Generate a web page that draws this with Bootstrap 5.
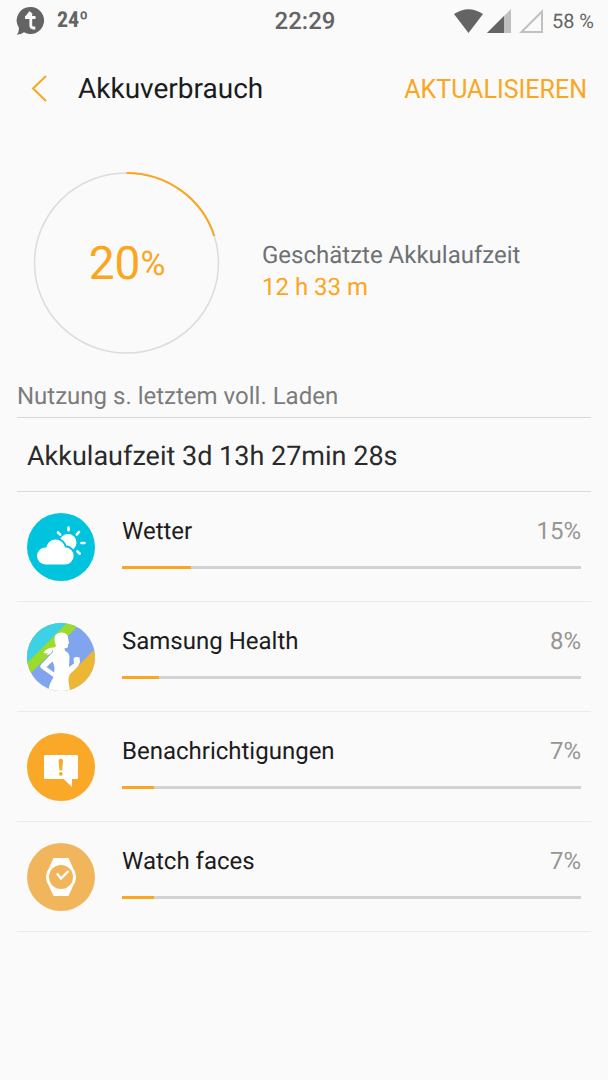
<!DOCTYPE html>
<html lang="de">
<head>
<meta charset="utf-8">
<meta name="viewport" content="width=device-width, initial-scale=1">
<title>Akkuverbrauch</title>
<link href="https://cdn.jsdelivr.net/npm/bootstrap@5.3.0/dist/css/bootstrap.min.css" rel="stylesheet">
<style>
  :root { --accent: #faa61f; --ink: #1c1c1c; --muted: #6e7173; }
  body { background: #fafafa; color: var(--ink); font-family: Roboto, sans-serif; font-size: 24px; line-height: 32px; text-rendering: geometricPrecision; }
  svg { display: block; flex: none; }
  .status-bar { height: 42px; padding: 0 14px 0 16px; color: #646464; line-height: 42px; }
  .status-side { flex: 1 1 0; }
  .status-temp { font-family: "Roboto Condensed", Roboto, sans-serif; font-weight: 700; font-size: 22px; line-height: 44px; }
  .status-time { font-weight: 500; }
  .status-level { font-size: 20px; }
  .app-bar { height: 94px; padding: 0 21px 0 28px; }
  .app-title { font-size: 28px; line-height: 36px; font-weight: 400; }
  .text-accent { color: var(--accent); }
  .refresh-btn { border: 0; background: none; color: var(--accent); font-size: 25px; padding: 2px 0 0; }
  .summary { padding: 35px 32px 0; gap: 40px; }
  .ring { width: 190px; height: 184px; }
  .ring-value { position: absolute; inset: 0; padding-top: 2px; }
  .ring-number { font-size: 46px; }
  .ring-unit { font-size: 34px; }
  .summary-text { padding-top: 16px; }
  .muted-text { color: var(--muted); }
  .usage { padding: 0 17px; }
  .usage-head { font-size: 24px; font-weight: 400; line-height: 32px; color: #7c7c7c; padding: 25px 0 5px; border-bottom: 1px solid #d8d8d8; }
  .uptime { font-size: 27px; line-height: 36px; padding: 20px 10px 17px; border-bottom: 1px solid #d8d8d8; color: #2a2a2a; }
  .app-row { height: 110px; padding: 0 10px; gap: 27px; border: 0; border-bottom: 1px solid #ececec; background: none; color: var(--ink); }
  .app-info { padding-bottom: 10px; }
  .app-share { color: #969696; }
  .app-meter { height: 3px; border-radius: 0; background: #d3d3d3; margin-top: 19px; }
  .app-meter .progress-bar { background: var(--accent); }
</style>
</head>
<body>
<header>
  <div class="status-bar d-flex align-items-center">
    <div class="status-side d-flex align-items-center gap-2">
      <svg width="29" height="30" viewBox="0 0 29 30"><path d="M14.500 1a13.500 13.500 0 1 1-6.500 25.300Q5 28.500 1 28.800Q3 26 3 22A13.500 13.500 0 0 1 14.500 1Z" fill="#646464"/><path d="M14.800 7v12q0 3 2.500 3h2M9 11.500h10.500M14.500 6l-4 5" fill="none" stroke="#fafafa" stroke-width="2.800"/></svg>
      <span class="status-temp ms-1">24º</span>
    </div>
    <span class="status-time">22:29</span>
    <div class="status-side d-flex align-items-center justify-content-end">
      <svg width="94" height="26" viewBox="0 0 94 26"><path d="M0 6Q14.500-3.500 29 6L14.500 25Z" fill="#646464"/><path d="M33 25 57 1V25Z" fill="#c0c0c0"/><path d="M33 25 50 8V25Z" fill="#646464"/><path d="M67.500 24 88 3.500V24Z" fill="none" stroke="#c0c0c0" stroke-width="2"/></svg>
      <span class="status-level ms-1">58 %</span>
    </div>
  </div>
  <nav class="app-bar d-flex align-items-center" aria-label="Kopfzeile">
    <a href="#" class="text-accent" aria-label="Zurück"><svg width="22" height="30" viewBox="0 0 22 30"><path d="M18 2 5 14.500 18 27" fill="none" stroke="currentColor" stroke-width="2"/></svg></a>
    <h1 class="app-title mb-0 ms-4 ps-1">Akkuverbrauch</h1>
    <button type="button" class="refresh-btn ms-auto">AKTUALISIEREN</button>
  </nav>
</header>
<main>
  <section class="summary d-flex align-items-center">
    <div class="ring position-relative flex-shrink-0">
      <svg width="190" height="184" viewBox="0 0 190 184"><ellipse cx="94.500" cy="92" rx="92" ry="90" fill="none" stroke="#dcdcdc" stroke-width="1.500"/><path d="M94.500 2A92 90 0 0 1 182.300 65" fill="none" stroke="#faa61f" stroke-width="2"/></svg>
      <div class="ring-value text-accent d-flex align-items-center justify-content-center"><span class="ring-number">20</span><span class="ring-unit">%</span></div>
    </div>
    <div class="summary-text">
      <div class="muted-text">Geschätzte Akkulaufzeit</div>
      <div class="text-accent">12 h 33 m</div>
    </div>
  </section>
  <section class="usage">
    <h2 class="usage-head mb-0">Nutzung s. letztem voll. Laden</h2>
    <div class="uptime">Akkulaufzeit 3d 13h 27min 28s</div>
    <ul class="list-group rounded-0">
      <li class="list-group-item app-row d-flex align-items-center">
        <svg width="68" height="68" viewBox="0 0 68 68"><circle cx="34" cy="34" r="34" fill="#00c4de"/><circle cx="41" cy="29.500" r="8.500" fill="#fff"/><g stroke="#fff" stroke-width="2.600" stroke-linecap="round"><path d="M31 19.500l2.200 2.200M41.500 14.500v2.800M52 19l-2.200 2.500M54.500 30h3M50.500 38.500l2.300 2.200"/></g><path d="M18.500 51.500a8.500 8.500 0 0 1 0-17h.8a9.500 9.500 0 0 1 18.700-.2 8.600 8.600 0 0 1 0 17.200Z" fill="#fff" stroke="#00c4de" stroke-width="4" paint-order="stroke"/></svg>
        <div class="app-info flex-grow-1">
          <div class="d-flex justify-content-between"><span>Wetter</span><span class="app-share">15%</span></div>
          <div class="progress app-meter" role="progressbar" aria-label="Wetter" aria-valuenow="15" aria-valuemin="0" aria-valuemax="100"><div class="progress-bar" style="width:15%"></div></div>
        </div>
      </li>
      <li class="list-group-item app-row d-flex align-items-center">
        <svg width="68" height="68" viewBox="0 0 68 68"><defs><clipPath id="disc"><circle cx="34" cy="34" r="34"/></clipPath></defs><g clip-path="url(#disc)"><path d="M0 0H68V68H0Z" fill="#80a4ed"/><path d="M0 0H54L0 54Z" fill="#9cda2b"/><path d="M0 0H40L0 40Z" fill="#3dd1e5"/><path d="M68 26V68H26Z" fill="#eeb733"/><path d="M27.500 18Q26.500 10 34 9.600Q40.500 9.600 41 14.500L42 20L41 21.500V24Q40 25.500 37.500 25L38 28Q42 29 42.500 34L42 44L47 40.500L46.500 36Q47 33.500 50 34L52.500 34.500L53 39Q52 43 48 46.500L43 51Q41 54 41.500 58L43 68H21Q22 61 26.500 54L14.500 45.500Q12 43.500 14.500 41L26 29V26.500Q24 32 19.500 32L21 30Q18 31 16.500 29.500Q20 24.500 27 24.500L29 23ZM25.500 38.500L19.500 44L27 49.500Q28.500 44 25.500 38.500Z" fill="#fff" fill-rule="evenodd"/></g></svg>
        <div class="app-info flex-grow-1">
          <div class="d-flex justify-content-between"><span>Samsung Health</span><span class="app-share">8%</span></div>
          <div class="progress app-meter" role="progressbar" aria-label="Samsung Health" aria-valuenow="8" aria-valuemin="0" aria-valuemax="100"><div class="progress-bar" style="width:8%"></div></div>
        </div>
      </li>
      <li class="list-group-item app-row d-flex align-items-center">
        <svg width="68" height="68" viewBox="0 0 68 68"><circle cx="34" cy="34" r="34" fill="#faa828"/><path d="M18.500 22H49.500Q51 22 51 23.500V44.500Q51 46 49.500 46H45V54L36.500 46H18.500Q17 46 17 44.500V23.500Q17 22 18.500 22Z" fill="#fff"/><path d="M31.600 28a2.200 2.200 0 0 1 4.400 0l-.9 9.500h-2.600Z" fill="#faa828"/><circle cx="33.800" cy="40.800" r="1.900" fill="#faa828"/></svg>
        <div class="app-info flex-grow-1">
          <div class="d-flex justify-content-between"><span>Benachrichtigungen</span><span class="app-share">7%</span></div>
          <div class="progress app-meter" role="progressbar" aria-label="Benachrichtigungen" aria-valuenow="7" aria-valuemin="0" aria-valuemax="100"><div class="progress-bar" style="width:7%"></div></div>
        </div>
      </li>
      <li class="list-group-item app-row d-flex align-items-center">
        <svg width="68" height="68" viewBox="0 0 68 68"><circle cx="34" cy="34" r="34" fill="#f1b65b"/><path d="M26.500 15H41.500L46 25A15 15 0 0 1 46 43L41.500 53H26.500L22 43A15 15 0 0 1 22 25Z" fill="#fff"/><circle cx="34" cy="34" r="12" fill="#f1b65b"/><path d="M30 30.500 34 35.500 41.500 28" fill="none" stroke="#fff" stroke-width="2.200"/></svg>
        <div class="app-info flex-grow-1">
          <div class="d-flex justify-content-between"><span>Watch faces</span><span class="app-share">7%</span></div>
          <div class="progress app-meter" role="progressbar" aria-label="Watch faces" aria-valuenow="7" aria-valuemin="0" aria-valuemax="100"><div class="progress-bar" style="width:7%"></div></div>
        </div>
      </li>
    </ul>
  </section>
</main>
<script src="https://cdn.jsdelivr.net/npm/bootstrap@5.3.0/dist/js/bootstrap.bundle.min.js"></script>
</body>
</html>
